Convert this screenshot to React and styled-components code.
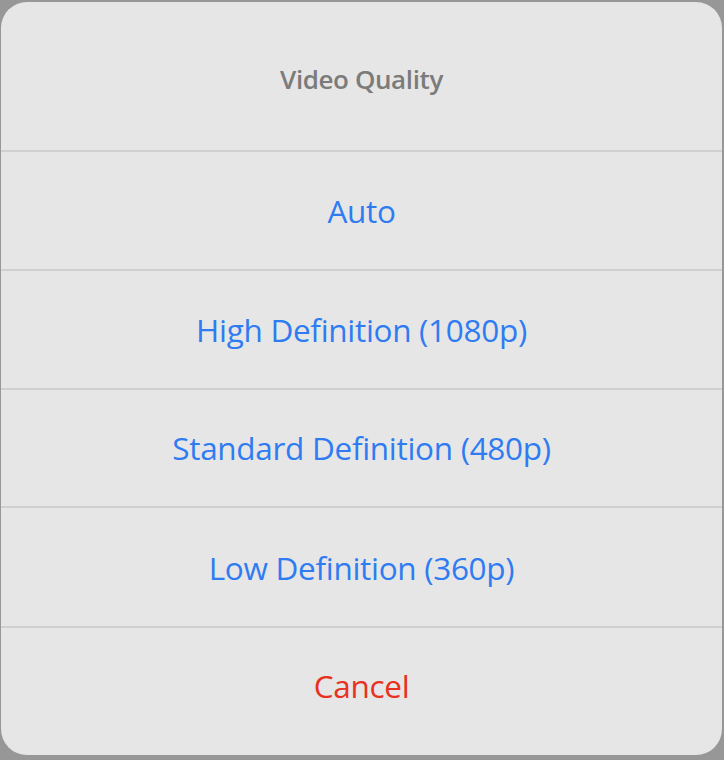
import React from 'react';
import styled, { createGlobalStyle } from 'styled-components';

const GlobalStyle = createGlobalStyle`
  html, body {
    margin: 0;
    padding: 0;
    background: #979797;
    font-family: "Open Sans", "Noto Sans", sans-serif;
  }
`;

const Backdrop = styled.div`
  width: 724px;
  height: 760px;
  padding: 2px 2px 0 1px;
  box-sizing: border-box;
  background: #979797;
`;

const Sheet = styled.div`
  display: flex;
  flex-direction: column;
  background: #e6e6e6;
  border-radius: 26px;
  overflow: hidden;
  height: 753px;
`;

const Header = styled.div`
  height: 150px;
  box-sizing: border-box;
  padding-top: 6px;
  display: flex;
  align-items: center;
  justify-content: center;
  border-bottom: 2px solid #d0d0d0;
  color: #7b7b7b;
  font-size: 26px;
  font-weight: 600;
  letter-spacing: -0.4px;
`;

const Option = styled.div`
  height: ${p => p.$h}px;
  box-sizing: border-box;
  padding-top: ${p => p.$shift > 0 ? p.$shift * 2 : 0}px;
  padding-bottom: ${p => p.$shift < 0 ? -p.$shift * 2 : 0}px;
  display: flex;
  align-items: center;
  justify-content: center;
  border-bottom: ${p => (p.$last ? 'none' : '2px solid #d0d0d0')};
  color: ${p => (p.$danger ? '#e8321f' : '#2f7cf2')};
  font-size: 31.5px;
  letter-spacing: -0.3px;
  cursor: pointer;
`;

const options = [
  { label: 'Auto', h: 119, shift: 0 },
  { label: 'High Definition (1080p)', h: 119, shift: 0 },
  { label: 'Standard Definition (480p)', h: 118, shift: -1 },
  { label: 'Low Definition (360p)', h: 120, shift: 0 },
];

export default function App() {
  return (
    <Backdrop>
      <GlobalStyle />
      <Sheet>
        <Header>Video Quality</Header>
        {options.map(o => (
          <Option key={o.label} $h={o.h} $shift={o.shift}>{o.label}</Option>
        ))}
        <Option $h={126} $shift={-6} $danger $last>Cancel</Option>
      </Sheet>
    </Backdrop>
  );
}
